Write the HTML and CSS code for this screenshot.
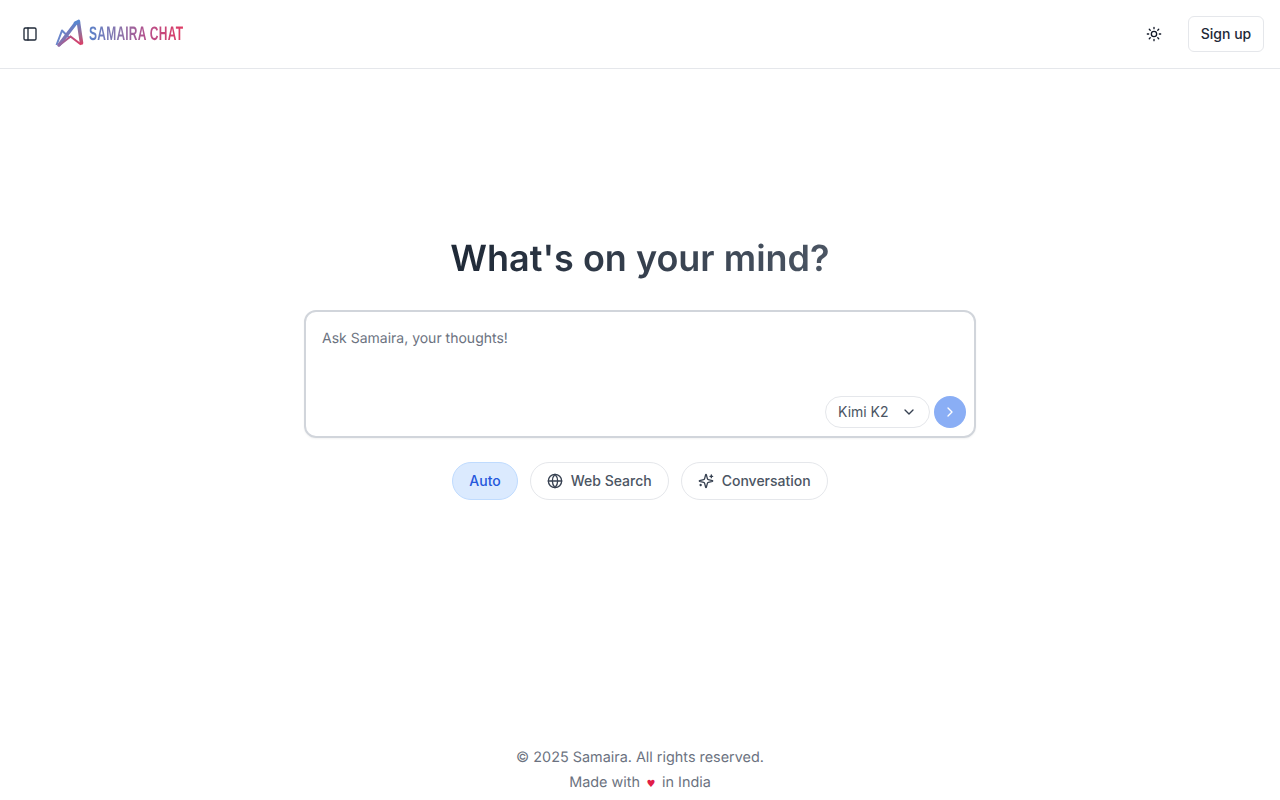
FILE: index.html
```html
<!DOCTYPE html>
<html lang="en">
<head>
<meta charset="utf-8">
<title>Samaira Chat</title>
<link rel="stylesheet" href="styles.css">
</head>
<body>
<div class="page">
  <header class="topbar">
    <div class="brand">
      <button class="icon-btn" aria-label="Toggle sidebar">
        <svg width="16" height="16" viewBox="0 0 24 24" fill="none" stroke="#1f2937" stroke-width="2" stroke-linecap="round" stroke-linejoin="round"><rect x="3" y="3" width="18" height="18" rx="2"/><path d="M9 3v18"/></svg>
      </button>
      <div class="logo">
        <svg class="logo-mark" width="30" height="30" viewBox="0 0 30 30" fill="none">
          <defs>
            <linearGradient id="lg1" gradientUnits="userSpaceOnUse" x1="3" y1="27" x2="24" y2="2"><stop offset="0" stop-color="#8f6ca6"/><stop offset="1" stop-color="#5a86cf"/></linearGradient>
            <linearGradient id="lg2" gradientUnits="userSpaceOnUse" x1="24" y1="2" x2="28" y2="27"><stop offset="0" stop-color="#5f84cb"/><stop offset="0.55" stop-color="#a0688f"/><stop offset="1" stop-color="#e03a62"/></linearGradient>
            <linearGradient id="lg3" gradientUnits="userSpaceOnUse" x1="4" y1="26" x2="28" y2="26"><stop offset="0" stop-color="#8b6da8"/><stop offset="1" stop-color="#e03a62"/></linearGradient>
          </defs>
          <path d="M2.5 26 L8 11.5 L15.5 19" stroke="#6a86cb" stroke-width="2" stroke-linejoin="round"/>
          <path d="M5 26 L21.5 4.5" stroke="url(#lg1)" stroke-width="3.6" stroke-linecap="round"/>
          <path d="M24.5 3.5 L27.5 24" stroke="url(#lg2)" stroke-width="3.6" stroke-linecap="round"/>
          <path d="M27 25.5 L16.5 17.5 L5 26.5" stroke="url(#lg3)" stroke-width="2.2" stroke-linejoin="round"/>
          <path d="M21.5 4 L24.5 2.5" stroke="#5a86cf" stroke-width="3.6" stroke-linecap="round"/>
        </svg>
        <span class="logo-text">SAMAIRA CHAT</span>
      </div>
    </div>
    <div class="actions">
      <button class="icon-btn" aria-label="Toggle theme">
        <svg width="16" height="16" viewBox="0 0 24 24" fill="none" stroke="#111827" stroke-width="2" stroke-linecap="round" stroke-linejoin="round"><circle cx="12" cy="12" r="4"/><path d="M12 2v2M12 20v2M4.93 4.93l1.41 1.41M17.66 17.66l1.41 1.41M2 12h2M20 12h2M6.34 17.66l-1.41 1.41M19.07 4.93l-1.41 1.41"/></svg>
      </button>
      <button class="signup"><span class="label">Sign up</span></button>
    </div>
  </header>

  <main class="main">
    <h1 class="headline">What's on your mind?</h1>
    <div class="composer">
      <div class="placeholder">Ask Samaira, your thoughts!</div>
      <div class="composer-tools">
        <button class="model">
          <span class="label">Kimi K2</span>
          <svg width="16" height="16" viewBox="0 0 24 24" fill="none" stroke="#374151" stroke-width="2" stroke-linecap="round" stroke-linejoin="round"><path d="m6 9 6 6 6-6"/></svg>
        </button>
        <button class="send" aria-label="Send">
          <svg width="16" height="16" viewBox="0 0 24 24" fill="none" stroke="#fff" stroke-width="2" stroke-linecap="round" stroke-linejoin="round"><path d="m9 18 6-6-6-6"/></svg>
        </button>
      </div>
    </div>
    <div class="modes">
      <button class="pill pill-active"><span class="label">Auto</span></button>
      <button class="pill">
        <svg width="16" height="16" viewBox="0 0 24 24" fill="none" stroke="#374151" stroke-width="2" stroke-linecap="round" stroke-linejoin="round"><circle cx="12" cy="12" r="10"/><path d="M12 2a14.5 14.5 0 0 0 0 20 14.5 14.5 0 0 0 0-20"/><path d="M2 12h20"/></svg>
        <span class="label">Web Search</span>
      </button>
      <button class="pill">
        <svg width="16" height="16" viewBox="0 0 24 24" fill="none" stroke="#374151" stroke-width="2" stroke-linecap="round" stroke-linejoin="round"><path d="M9.937 15.5A2 2 0 0 0 8.5 14.063l-6.135-1.582a.5.5 0 0 1 0-.962L8.5 9.936A2 2 0 0 0 9.937 8.5l1.582-6.135a.5.5 0 0 1 .963 0L14.063 8.5A2 2 0 0 0 15.5 9.937l6.135 1.581a.5.5 0 0 1 0 .964L15.5 14.063a2 2 0 0 0-1.437 1.437l-1.582 6.135a.5.5 0 0 1-.963 0z"/><path d="M20 3v4M22 5h-4M4 17v2M5 18H3"/></svg>
        <span class="label">Conversation</span>
      </button>
    </div>
  </main>

  <footer class="footer">
    <p class="footer-line">© 2025 Samaira. All rights reserved.</p>
    <p class="footer-line">Made with <span class="heart">♥</span> in India</p>
  </footer>
</div>
</body>
</html>
```
FILE: styles.css
```css
* { box-sizing: border-box; }
html, body { margin: 0; height: 100%; }
body { background: #fff; font-family: Inter, "Liberation Sans", sans-serif; color: #111827; text-rendering: geometricPrecision; }
button { font: inherit; cursor: pointer; background: none; border: 0; padding: 0; }
.label { display: block; margin-bottom: 2px; }
.page { height: 800px; display: flex; flex-direction: column; }
.topbar { height: 69px; flex: none; border-bottom: 1px solid #e5e7eb; display: flex; align-items: center; justify-content: space-between; padding: 0 16px; }
.brand { display: flex; align-items: center; gap: 10px; }
.icon-btn { width: 28px; height: 36px; display: flex; align-items: center; justify-content: center; }
.logo { display: flex; align-items: center; gap: 5px; }
.logo-mark { display: block; }
.logo-text { display: inline-block; width: 155px; margin-right: -61px; font-family: "Liberation Sans", sans-serif; font-weight: 700; font-size: 19.5px; line-height: 20px; letter-spacing: 0.4px; white-space: nowrap; background: linear-gradient(90deg, #5b82c9 0%, #8f72a8 35%, #b4508c 60%, #e03a62 100%); -webkit-background-clip: text; background-clip: text; color: transparent; transform: scaleX(0.615); transform-origin: left center; }
.actions { display: flex; align-items: center; gap: 20px; }
.signup { height: 36px; width: 76px; border: 1px solid #e5e7eb; border-radius: 6px; font-size: 14px; font-weight: 500; color: #1f2937; display: flex; align-items: center; justify-content: center; }
.main { flex: 1; display: flex; flex-direction: column; align-items: center; padding-top: 165px; }
.headline { margin: 0; font-size: 36px; line-height: 48px; font-weight: 600; background: linear-gradient(90deg, #1f2937, #4b5563); -webkit-background-clip: text; background-clip: text; color: transparent; }
.composer { width: 672px; height: 128px; margin-top: 28px; border: 2px solid #d1d5db; border-radius: 12px; padding: 17px 16px 16px; display: flex; flex-direction: column; justify-content: space-between; box-shadow: 0 1px 2px rgba(0,0,0,.05); }
.placeholder { font-size: 14px; line-height: 20px; color: #6b7280; }
.composer-tools { display: flex; justify-content: flex-end; align-items: center; gap: 4px; margin: 0 -8px -8px 0; }
.model { height: 32px; width: 105px; border: 1px solid #e5e7eb; border-radius: 16px; display: flex; align-items: center; justify-content: space-between; padding: 0 12px; font-size: 14px; color: #4b5563; }
.send { width: 32px; height: 32px; border-radius: 50%; background: #8aaef5; display: flex; align-items: center; justify-content: center; }
.modes { display: flex; gap: 12px; margin-top: 24px; }
.pill { height: 38px; padding: 0 16px; border: 1px solid #e5e7eb; border-radius: 19px; display: flex; align-items: center; gap: 8px; font-size: 14px; font-weight: 500; color: #4b5563; }
.pill-active { background: #dbeafe; border-color: #bfdbfe; color: #2558dc; }
.footer { flex: none; text-align: center; padding-bottom: 3px; }
.footer-line { margin: 0; font-size: 14.4px; line-height: 25px; color: #6b7280; }
.heart { color: #e11d48; margin: 0 2.5px; font-family: "DejaVu Sans", sans-serif; font-size: 10px; }
```
